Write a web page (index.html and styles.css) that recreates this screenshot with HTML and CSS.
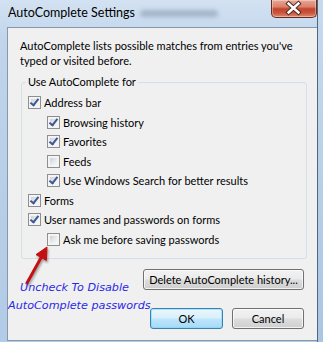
FILE: index.html
```html
<!DOCTYPE html>
<html>
<head>
<meta charset="utf-8">
<link rel="stylesheet" href="styles.css">
</head>
<body>
<div class="window">
  <div class="titlebar">
    <span class="title">AutoComplete Settings</span>
    <span class="ghost"></span>
    <span class="close" aria-label="Close">
      <svg width="46" height="18" viewBox="0 0 46 18">
        <path d="M18 4.5 L28 13.5 M28 4.5 L18 13.5" stroke="#4a2a22" stroke-width="4.6" stroke-linecap="square"/>
        <path d="M18 4.5 L28 13.5 M28 4.5 L18 13.5" stroke="#ffffff" stroke-width="2.6" stroke-linecap="square"/>
      </svg>
    </span>
  </div>
  <div class="client">
    <p class="desc">AutoComplete lists possible matches from entries you've<br>typed or visited before.</p>
    <fieldset class="group">
      <legend>Use AutoComplete for</legend>
      <ul class="options">
        <li class="opt"><span class="cb on"></span>Address bar</li>
        <li class="opt sub"><span class="cb on"></span>Browsing history</li>
        <li class="opt sub"><span class="cb on"></span>Favorites</li>
        <li class="opt sub"><span class="cb"></span>Feeds</li>
        <li class="opt sub"><span class="cb on"></span>Use Windows Search for better results</li>
        <li class="opt"><span class="cb on"></span>Forms</li>
        <li class="opt"><span class="cb on"></span>User names and passwords on forms</li>
        <li class="opt sub"><span class="cb"></span>Ask me before saving passwords</li>
      </ul>
    </fieldset>
    <div class="row-delete"><span class="btn btn-delete">Delete AutoComplete history...</span></div>
    <div class="row-actions"><span class="btn btn-ok">OK</span><span class="btn btn-cancel">Cancel</span></div>
  </div>
  <svg class="arrow" width="70" height="50" viewBox="0 0 70 50">
    <path d="M27 43 L42 16" stroke="#c41010" stroke-width="3" stroke-linecap="round"/>
    <path d="M47 7 L46.4 20.4 L36 14.6 Z" fill="#c41010" stroke="#c41010" stroke-width="1" stroke-linejoin="round"/>
  </svg>
  <div class="note">
    <div class="note-l1">Uncheck To Disable</div>
    <div class="note-l2">AutoComplete passwords</div>
  </div>
</div>
</body>
</html>
```
FILE: styles.css
```css
html, body {
  margin: 0;
  padding: 0;
}
body {
  width: 323px;
  height: 342px;
  overflow: hidden;
  background: linear-gradient(180deg, #c6daee 0%, #a9c6e4 100%);
  font-family: Lato, "Noto Sans", sans-serif;
  font-size: 11px;
  color: #000;
}
.window {
  position: relative;
  width: 317px;
  height: 342px;
  display: flex;
  flex-direction: column;
  border-right: 1px solid #52667c;
  background: linear-gradient(180deg, #d3e2f2 0%, #c0d5eb 12%, #b7cee8 60%, #b2cbe6 100%);
  box-sizing: content-box;
}
.titlebar {
  position: relative;
  height: 27px;
  display: flex;
  align-items: flex-start;
  padding-left: 8px;
  flex: none;
}
.title {
  margin-top: 4px;
  font-size: 12.5px;
  line-height: 18px;
  color: #000;
}
.ghost {
  position: absolute;
  left: 140px;
  top: 10px;
  width: 78px;
  height: 7px;
  border-radius: 4px;
  background: rgba(90, 105, 130, 0.35);
  filter: blur(2px);
}
.close {
  margin-left: auto;
  width: 46px;
  height: 18px;
  box-sizing: border-box;
  border: 1px solid #6b2a20;
  border-top: none;
  border-radius: 0 0 5px 5px;
  background: linear-gradient(180deg, #e9a795 0%, #d9816c 40%, #c5442c 52%, #c9543c 75%, #dc8a70 100%);
  box-shadow: inset 0 0 0 1px rgba(255, 255, 255, 0.35);
  display: flex;
}
.close svg {
  display: block;
  margin: -1px 0 0 -1px;
}
.client {
  flex: 1;
  margin: 0 0 1px 7px;
  border-left: 1px solid #8798ab;
  border-top: 1px solid #8798ab;
  border-bottom: 1px solid #8798ab;
  background: #f0f0f0;
  display: flex;
  flex-direction: column;
}
.desc {
  margin: 0;
  padding: 10px 0 0 12px;
  line-height: 15px;
  white-space: nowrap;
}
.group {
  margin: 6px 10px 0 13px;
  padding: 3px 0 9px 6px;
  border: 1px solid #d5dfe5;
  border-radius: 3px;
  min-inline-size: auto;
}
.group legend {
  margin-left: -2px;
  padding: 0 2px;
  line-height: 16px;
}
.options {
  list-style: none;
  margin: 0;
  padding: 0;
}
.opt {
  display: flex;
  align-items: center;
  gap: 3px;
  height: 19.5px;
  white-space: nowrap;
}
.opt.sub {
  padding-left: 19px;
}
.cb {
  width: 13px;
  height: 13px;
  box-sizing: border-box;
  border: 1px solid #8e8f8f;
  background:
    linear-gradient(135deg, #cdd1d7 0%, #e8e9eb 55%, #f8f8f8 100%) content-box,
    #f4f4f4;
  padding: 2px;
  flex: none;
  position: relative;
}
.cb.on::after {
  content: "";
  position: absolute;
  left: 3px;
  top: 0px;
  width: 3px;
  height: 7px;
  border-right: 2px solid #3c5897;
  border-bottom: 2px solid #3c5897;
  transform: rotate(38deg);
  transform-origin: center;
}
.row-delete {
  display: flex;
  justify-content: flex-end;
  padding-right: 13px;
  margin-top: 10px;
}
.row-actions {
  display: flex;
  justify-content: flex-end;
  gap: 9px;
  padding-right: 13px;
  margin-top: 18px;
}
.btn {
  display: flex;
  align-items: center;
  justify-content: center;
  height: 21px;
  box-sizing: border-box;
  border: 1px solid #707070;
  border-radius: 3px;
  background: linear-gradient(180deg, #f2f2f2 0%, #ebebeb 48%, #dddddd 52%, #cfcfcf 100%);
  box-shadow: inset 0 0 0 1px rgba(255, 255, 255, 0.7);
  font-size: 11px;
  white-space: nowrap;
}
.btn-delete {
  width: 161px;
}
.btn-ok {
  width: 73px;
  border-color: #3c7fb1;
  background: linear-gradient(180deg, #eaf6fd 0%, #d9f0fc 48%, #bee6fd 52%, #a7d9f5 100%);
  box-shadow: inset 0 0 0 1px rgba(120, 220, 250, 0.6);
}
.btn-cancel {
  width: 72px;
}
.arrow {
  position: absolute;
  left: 0;
  top: 240px;
  filter: drop-shadow(1px 2px 1px rgba(0, 0, 0, 0.35));
}
.note {
  position: absolute;
  left: 0;
  top: 279px;
  font-family: "DejaVu Sans", sans-serif;
  font-style: italic;
  font-size: 11.2px;
  line-height: 18px;
  color: #2a2ae6;
}
.note-l1 {
  padding-left: 20px;
}
.note-l2 {
  padding-left: 8px;
}
```
